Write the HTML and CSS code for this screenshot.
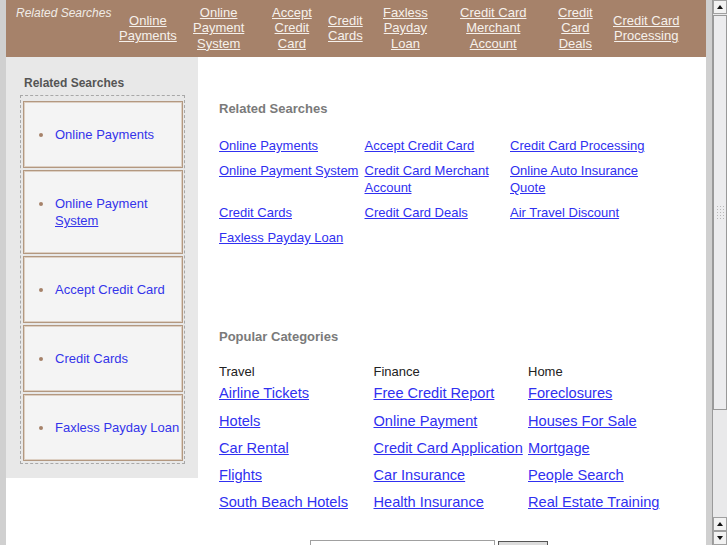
FILE: index.html
```html
<!DOCTYPE html>
<html lang="en">

<head>
    <meta charset="UTF-8">
    <meta name="viewport" content="width=device-width, initial-scale=1.0">
    <title>Related Searches</title>
    <link rel="stylesheet" href="styles.css">
</head>

<body>
    <div class="page">
        <div class="wrap">
            <!-- Barra superior -->
            <div class="top-bar">
                <span class="top-title">Related Searches</span>
                <a href="#">Online<br>Payments</a>
                <a href="#">Online<br>Payment<br>System</a>
                <a href="#">Accept<br>Credit<br>Card</a>
                <a href="#">Credit<br>Cards</a>
                <a href="#">Faxless<br>Payday<br>Loan</a>
                <a href="#">Credit Card<br>Merchant<br>Account</a>
                <a href="#">Credit<br>Card<br>Deals</a>
                <a href="#">Credit Card<br>Processing</a>
            </div>

            <div class="main">
                <!-- Columna lateral -->
                <div class="sidebar">
                    <h3 class="side-title">Related Searches</h3>
                    <ul class="side-list">
                        <li class="side-item"><a href="#">Online Payments</a></li>
                        <li class="side-item"><a href="#">Online Payment<br><span class="under">System</span></a></li>
                        <li class="side-item"><a href="#">Accept Credit Card</a></li>
                        <li class="side-item"><a href="#">Credit Cards</a></li>
                        <li class="side-item"><a href="#">Faxless Payday Loan</a></li>
                    </ul>
                </div>

                <!-- Contenido -->
                <div class="content">
                    <h2 class="block-title">Related Searches</h2>
                    <div class="links-grid">
                        <a href="#">Online Payments</a>
                        <a href="#">Accept Credit Card</a>
                        <a href="#">Credit Card Processing</a>
                        <a href="#">Online Payment System</a>
                        <a href="#">Credit Card Merchant Account</a>
                        <a href="#">Online Auto Insurance Quote</a>
                        <a href="#">Credit Cards</a>
                        <a href="#">Credit Card Deals</a>
                        <a href="#">Air Travel Discount</a>
                        <a href="#">Faxless Payday Loan</a>
                    </div>

                    <h2 class="block-title popular">Popular Categories</h2>
                    <div class="categories">
                        <div class="cat">
                            <div class="cat-name">Travel</div>
                            <a href="#">Airline Tickets</a>
                            <a href="#">Hotels</a>
                            <a href="#">Car Rental</a>
                            <a href="#">Flights</a>
                            <a href="#">South Beach Hotels</a>
                        </div>
                        <div class="cat">
                            <div class="cat-name">Finance</div>
                            <a href="#">Free Credit Report</a>
                            <a href="#">Online Payment</a>
                            <a href="#">Credit Card Application</a>
                            <a href="#">Car Insurance</a>
                            <a href="#">Health Insurance</a>
                        </div>
                        <div class="cat">
                            <div class="cat-name">Home</div>
                            <a href="#">Foreclosures</a>
                            <a href="#">Houses For Sale</a>
                            <a href="#">Mortgage</a>
                            <a href="#">People Search</a>
                            <a href="#">Real Estate Training</a>
                        </div>
                    </div>

                    <form class="search">
                        <input type="text" class="search-input">
                        <button type="button" class="search-btn"></button>
                    </form>
                </div>
            </div>
        </div>
    </div>

    <!-- Barra de desplazamiento dibujada -->
    <div class="scrollbar">
        <div class="sb-btn"><span class="arrow-up"></span></div>
        <div class="sb-track">
            <div class="sb-thumb"><div class="grip"></div></div>
        </div>
        <div class="sb-btn"><span class="arrow-up"></span></div>
        <div class="sb-btn"><span class="arrow-down"></span></div>
    </div>
</body>

</html>
```

FILE: styles.css
```css
body {
    font-family: "Liberation Sans", Arial, sans-serif;
    margin: 0;
    padding: 0;
    height: 545px;
    overflow: hidden;
    display: flex;
    background: #d0d0d0;
}

.page {
    flex: 1;
    padding: 0 6px;
}

.wrap {
    background: white;
    height: 100%;
}

/* Barra superior */
.top-bar {
    height: 57px;
    background: #a6826a;
    display: grid;
    grid-template-columns: 113px 74px 79px 56px 55px 77px 98px 55px auto;
    align-items: center;
    justify-items: start;
}

.top-title {
    align-self: start;
    padding: 6px 0 0 10px;
    font-size: 12px;
    font-style: italic;
    color: #f0ebe6;
}

.top-bar a {
    font-size: 13px;
    line-height: 15.5px;
    color: #f6f1ec;
    text-align: center;
    white-space: nowrap;
    margin-top: -1px;
}

.main {
    display: flex;
}

/* Columna lateral */
.sidebar {
    width: 192px;
    box-sizing: border-box;
    background: #e8e8e8;
    padding: 19px 13px 12px 14px;
    height: 421px;
}

.side-title {
    margin: 0 0 5px 4px;
    font-size: 12px;
    line-height: 14px;
    color: #555;
}

.side-list {
    list-style: none;
    margin: 0;
    padding: 5px 1px 2px 2px;
    border: 1px dashed #a8a8a8;
    display: flex;
    flex-direction: column;
    gap: 2px;
}

.side-item {
    display: flex;
    align-items: flex-start;
    background: #f4f4f4;
    border: 1px solid #b39880;
    box-shadow: inset 0 0 0 1px #ddd0c4;
    padding: 24px 0;
    font-size: 13px;
    line-height: 17px;
}

.side-item::before {
    content: "";
    width: 4px;
    height: 4px;
    border-radius: 50%;
    background: #a6826a;
    margin: 7px 12px 0 15px;
    flex-shrink: 0;
}

.side-item a {
    color: #3434ea;
    text-decoration: none;
    white-space: nowrap;
}

.side-item .under {
    text-decoration: underline;
}

/* Contenido */
.content {
    flex: 1;
    padding: 44px 0 0 21px;
}

.block-title {
    margin: 0 0 20px;
    font-size: 13px;
    line-height: 16px;
    color: #7a7a7a;
}

.block-title.popular {
    margin-top: 83px;
    margin-bottom: 19px;
}

.links-grid {
    display: grid;
    grid-template-columns: 145.5px 145.5px 150px;
    row-gap: 8px;
    align-items: start;
    justify-items: start;
    font-size: 13px;
    line-height: 17px;
}

.links-grid a,
.cat a {
    color: #3030f0;
}

.categories {
    display: grid;
    grid-template-columns: 154.5px 154.5px 160px;
}

.cat {
    display: flex;
    flex-direction: column;
    align-items: flex-start;
    gap: 8.3px;
}

.cat-name {
    font-size: 13px;
    line-height: 16px;
    color: #222;
    margin-bottom: -4px;
}

.cat a {
    font-size: 14.6px;
    line-height: 19px;
    white-space: nowrap;
}

.search {
    display: flex;
    gap: 3px;
    margin: 28px 0 0 91px;
}

.search-input {
    width: 185px;
    height: 22px;
    box-sizing: border-box;
    border: 1px solid #a0a0a0;
    margin: 0;
}

.search-btn {
    width: 50px;
    height: 24px;
    margin-top: 1px;
    background: #dcdcdc;
    border: 1px solid #555;
}

/* Barra de desplazamiento */
.scrollbar {
    width: 15px;
    display: flex;
    flex-direction: column;
    background: #e9e9ea;
    border-left: 1px solid #9a9a9a;
    box-sizing: border-box;
}

.sb-btn {
    height: 14px;
    border: 1px solid #a0a0a0;
    background: #f2f2f2;
    box-sizing: border-box;
    display: flex;
    align-items: center;
    justify-content: center;
}

.arrow-up {
    border-left: 3px solid transparent;
    border-right: 3px solid transparent;
    border-bottom: 4px solid #111;
}

.arrow-down {
    border-left: 3px solid transparent;
    border-right: 3px solid transparent;
    border-top: 4px solid #111;
}

.sb-track {
    flex: 1;
    padding-top: 1px;
}

.sb-thumb {
    height: 395px;
    border: 1px solid #999;
    background: #ececee;
    box-sizing: border-box;
    padding-top: 189px;
}

.grip {
    width: 8px;
    height: 16px;
    margin: 0 auto;
    background-image: radial-gradient(circle, #b8b8b8 0.8px, transparent 1px);
    background-size: 3px 3px;
}
```
